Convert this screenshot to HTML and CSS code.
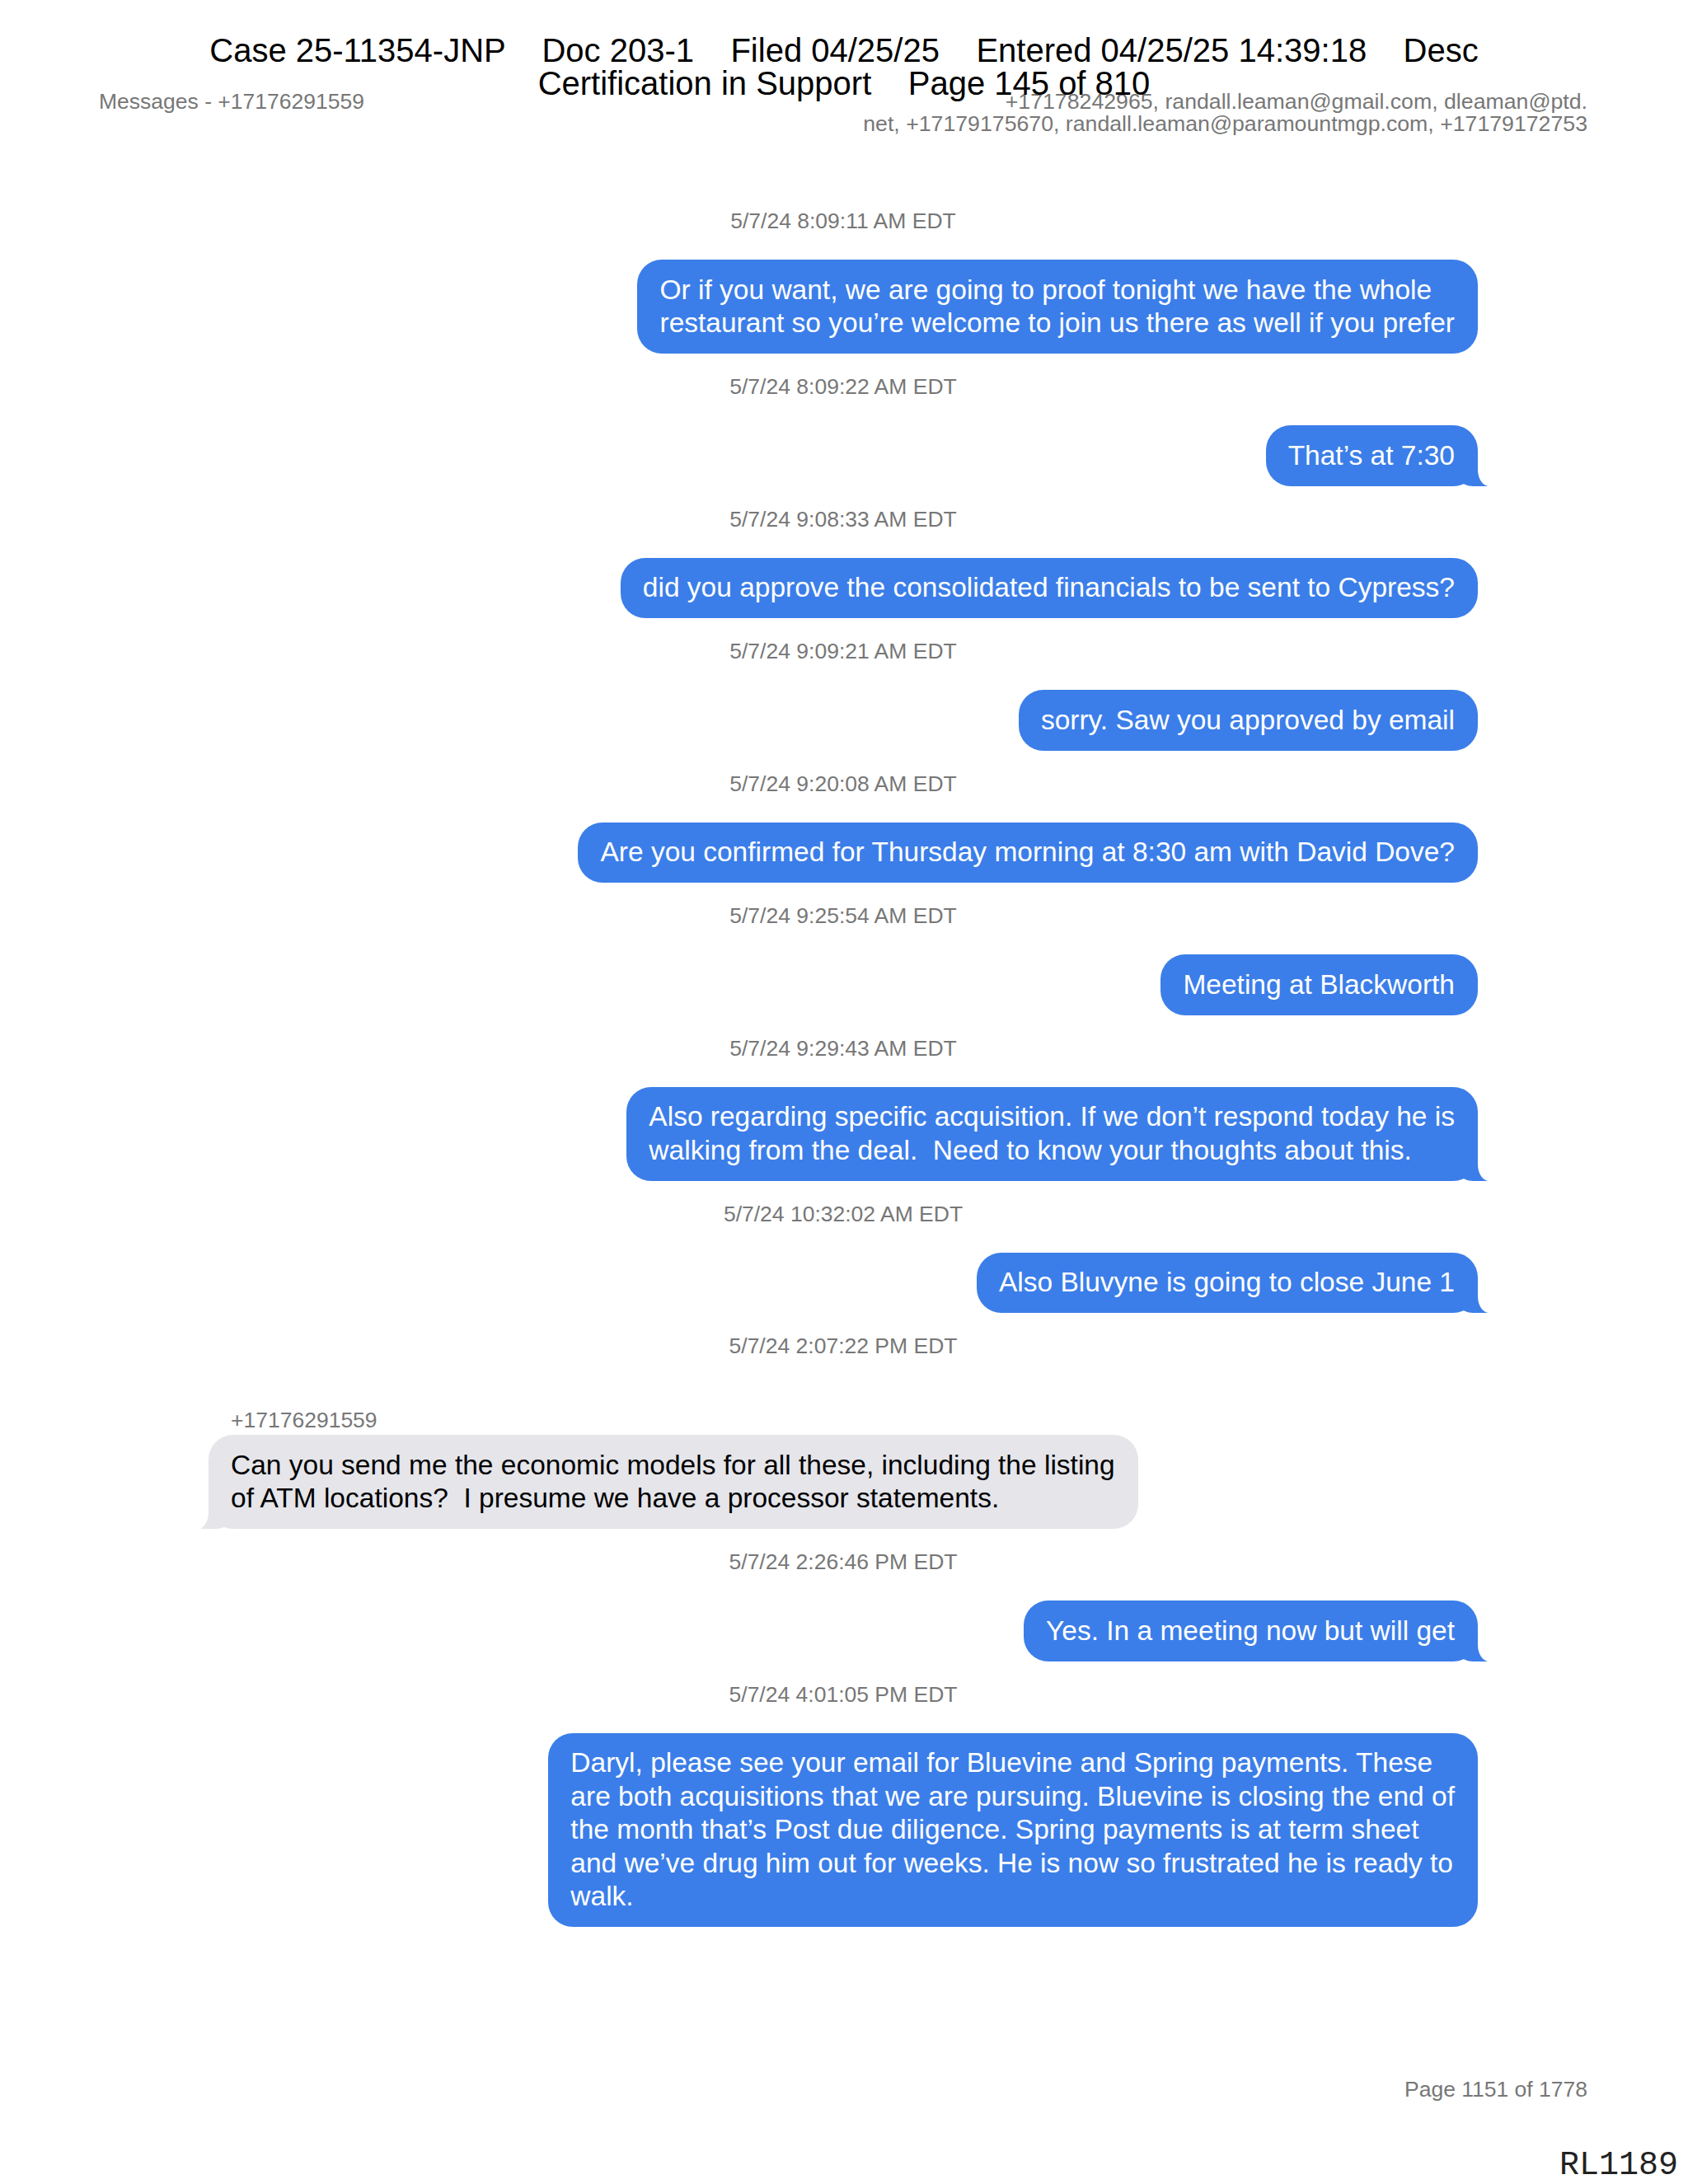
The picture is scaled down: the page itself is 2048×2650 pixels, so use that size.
FILE: index.html
```html
<!DOCTYPE html>
<html lang="en">
<head>
<meta charset="utf-8">
<title>Messages - +17176291559</title>
<link rel="stylesheet" href="styles.css">
</head>
<body>
<div class="page">
  <div class="stamp">
    <div class="stamp-line">Case 25-11354-JNP    Doc 203-1    Filed 04/25/25    Entered 04/25/25 14:39:18    Desc</div>
    <div class="stamp-line">Certification in Support    Page 145 of 810</div>
  </div>

  <header class="msgs-head">
    <div class="head-left">Messages - +17176291559</div>
    <div class="head-right">+17178242965, randall.leaman@gmail.com, dleaman@ptd.<br>net, +17179175670, randall.leaman@paramountmgp.com, +17179172753</div>
  </header>

  <main class="thread">
    <div class="ts">5/7/24 8:09:11 AM EDT</div>
    <div class="row out"><div class="bubble">Or if you want, we are going to proof tonight we have the whole<br>restaurant so you’re welcome to join us there as well if you prefer</div></div>

    <div class="ts">5/7/24 8:09:22 AM EDT</div>
    <div class="row out"><div class="bubble tail">That’s at 7:30</div></div>

    <div class="ts">5/7/24 9:08:33 AM EDT</div>
    <div class="row out"><div class="bubble">did you approve the consolidated financials to be sent to Cypress?</div></div>

    <div class="ts">5/7/24 9:09:21 AM EDT</div>
    <div class="row out"><div class="bubble">sorry. Saw you approved by email</div></div>

    <div class="ts">5/7/24 9:20:08 AM EDT</div>
    <div class="row out"><div class="bubble">Are you confirmed for Thursday morning at 8:30 am with David Dove?</div></div>

    <div class="ts">5/7/24 9:25:54 AM EDT</div>
    <div class="row out"><div class="bubble">Meeting at Blackworth</div></div>

    <div class="ts">5/7/24 9:29:43 AM EDT</div>
    <div class="row out"><div class="bubble tail">Also regarding specific acquisition. If we don’t respond today he is<br>walking from the deal.&nbsp; Need to know your thoughts about this.</div></div>

    <div class="ts">5/7/24 10:32:02 AM EDT</div>
    <div class="row out"><div class="bubble tail">Also Bluvyne is going to close June 1</div></div>

    <div class="ts">5/7/24 2:07:22 PM EDT</div>
    <div class="sender">+17176291559</div>
    <div class="row in"><div class="bubble tail">Can you send me the economic models for all these, including the listing<br>of ATM locations?&nbsp; I presume we have a processor statements.</div></div>

    <div class="ts">5/7/24 2:26:46 PM EDT</div>
    <div class="row out"><div class="bubble tail">Yes. In a meeting now but will get</div></div>

    <div class="ts">5/7/24 4:01:05 PM EDT</div>
    <div class="row out"><div class="bubble">Daryl, please see your email for Bluevine and Spring payments. These<br>are both acquisitions that we are pursuing. Bluevine is closing the end of<br>the month that’s Post due diligence. Spring payments is at term sheet<br>and we’ve drug him out for weeks. He is now so frustrated he is ready to<br>walk.</div></div>
  </main>

  <footer class="page-foot">Page 1151 of 1778</footer>

  <div class="bates">RL1189</div>
</div>
</body>
</html>
```

FILE: styles.css
```css
html, body {
  margin: 0;
  padding: 0;
  background: #ffffff;
}

body {
  font-family: "Liberation Sans", Arial, sans-serif;
  color: #000;
}

.page {
  position: relative;
  width: 2048px;
  min-height: 2650px;
  overflow: hidden;
}

/* court filing stamp laid over the page header */
.stamp {
  position: absolute;
  top: 41px;
  left: 0;
  right: 0;
  z-index: 5;
  text-align: center;
  font-size: 40px;
  line-height: 40px;
  color: #000;
}

.stamp-line {
  white-space: pre;
}

.msgs-head {
  display: flex;
  justify-content: space-between;
  align-items: flex-start;
  padding: 110px 122px 0 120px;
  font-size: 26.5px;
  line-height: 27px;
  color: #777777;
}

.head-right {
  text-align: right;
  font-size: 26.7px;
}

.thread {
  display: flex;
  flex-direction: column;
  padding: 64px 255px 0 253px;
}

.ts {
  text-align: center;
  font-size: 26.5px;
  line-height: 30px;
  color: #777777;
  margin: 25px 0 32px;
}

.sender {
  font-size: 26.5px;
  line-height: 30px;
  color: #777777;
  margin: 28px 0 3px 27px;
}

.row {
  display: flex;
  justify-content: flex-end;
}

.row.in {
  justify-content: flex-start;
}

.bubble {
  position: relative;
  z-index: 0;
  font-size: 33.5px;
  line-height: 40.5px;
  padding: 16.5px 28px 16.5px 27px;
  border-radius: 30px;
  white-space: nowrap;
  background: #3b7ee9;
  color: #ffffff;
}

.row.in .bubble {
  background: #e5e5ea;
  color: #000000;
}

/* tails */
.bubble.tail::before,
.bubble.tail::after {
  content: "";
  position: absolute;
  bottom: 0;
  z-index: -1;
}

.row.out .bubble.tail::before {
  right: -12px;
  width: 34px;
  height: 30px;
  background: #3b7ee9;
  border-bottom-left-radius: 16px 10px;
}

.row.out .bubble.tail::after {
  right: -22px;
  width: 22px;
  height: 34px;
  background: #ffffff;
  border-bottom-left-radius: 14px 20px;
}

.row.in .bubble.tail::before {
  left: -9px;
  width: 34px;
  height: 30px;
  background: #e5e5ea;
  border-bottom-right-radius: 16px 10px;
}

.row.in .bubble.tail::after {
  left: -22px;
  width: 22px;
  height: 34px;
  background: #ffffff;
  border-bottom-right-radius: 13px 20px;
}

.page-foot {
  text-align: right;
  padding-right: 122px;
  margin-top: 182px;
  font-size: 26.5px;
  line-height: 30px;
  color: #777777;
}

.bates {
  position: absolute;
  right: 12px;
  top: 2608px;
  font-family: "Liberation Mono", "Courier New", monospace;
  font-size: 40px;
  line-height: 40px;
  color: #222222;
}
```
